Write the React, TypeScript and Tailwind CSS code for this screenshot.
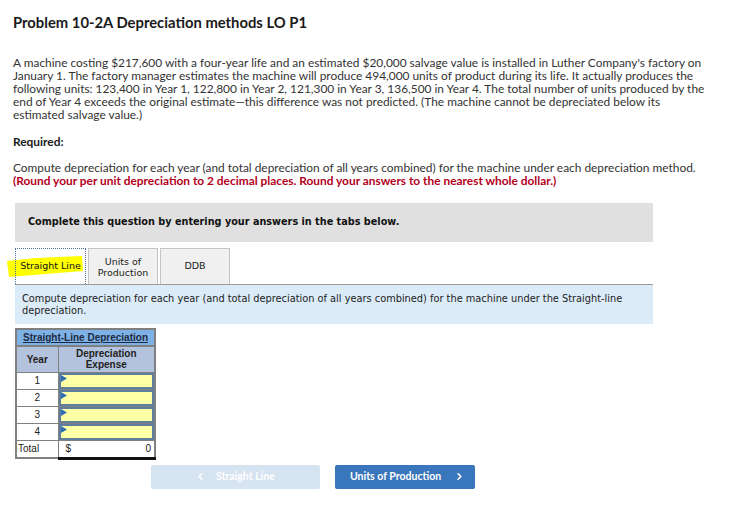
import React from "react";
import { ChevronLeft, ChevronRight } from "lucide-react";

const Tri = () => (
  <svg className="absolute left-0 top-0" width="6" height="7" viewBox="0 0 6 7">
    <polygon points="0,0 6,3.5 0,7" fill="#2f6db5" />
  </svg>
);

export default function App() {
  const rows = [1, 2, 3, 4];
  return (
    <div className="w-[739px] h-[532px] bg-white text-[#222] font-['Lato',sans-serif] relative overflow-hidden">
      <div className="pl-[13px] pr-[10px]">
        <h1 className="pt-[13px] text-[14.8px] leading-[18px] font-bold text-[#1a1a1a]">
          Problem 10-2A Depreciation methods LO P1
        </h1>
        <p className="mt-[25px] text-[11.9px] leading-[13px] text-[#333] whitespace-nowrap">
          A machine costing $217,600 with a four-year life and an estimated $20,000 salvage value is installed in Luther Company's factory on
          <br />
          January 1. The factory manager estimates the machine will produce 494,000 units of product during its life. It actually produces the
          <br />
          following units: 123,400 in Year 1, 122,800 in Year 2, 121,300 in Year 3, 136,500 in Year 4. The total number of units produced by the
          <br />
          end of Year 4 exceeds the original estimate—this difference was not predicted. (The machine cannot be depreciated below its
          <br />
          estimated salvage value.)
        </p>
        <p className="mt-[14px] text-[11.9px] leading-[13px] font-bold text-[#1a1a1a]">Required:</p>
        <p className="mt-[13px] text-[11.9px] leading-[13px] text-[#333] whitespace-nowrap">
          Compute depreciation for each year (and total depreciation of all years combined) for the machine under each depreciation method.
        </p>
        <p className="text-[11.9px] leading-[13px] font-bold text-[#b3001b] whitespace-nowrap">
          (Round your per unit depreciation to 2 decimal places. Round your answers to the nearest whole dollar.)
        </p>
      </div>

      <div className="ml-[15px] w-[638px] mt-[16px] font-['DejaVu_Sans',sans-serif]">
        <div className="h-[39px] bg-[#e0e0e0] flex items-center pl-[13px] text-[9.7px] font-bold text-[#111]">
          Complete this question by entering your answers in the tabs below.
        </div>

        <div className="mt-[6px] flex items-end gap-[2px] relative">
          <svg className="absolute left-[-9px] top-[7px]" width="78" height="23" viewBox="0 0 78 23">
            <polygon points="1,6 30,3 76,1 77,16 40,19 3,22" fill="#ffff00" />
          </svg>
          <div className="relative w-[71px] h-[36px] bg-transparent border border-dotted border-[#4a6f99] border-b-0 flex items-center justify-center text-[9.5px] text-[#111]">
            <span className="relative">Straight Line</span>
          </div>
          <div className="w-[70px] h-[36px] bg-[#f0f0f0] border border-[#c4c4c4] border-b-0 flex items-center justify-center text-center text-[9.5px] leading-[11px] text-[#222]">
            Units of<br />Production
          </div>
          <div className="w-[70px] h-[36px] bg-[#f0f0f0] border border-[#c4c4c4] border-b-0 flex items-center justify-center text-[9.5px] text-[#222]">
            DDB
          </div>
        </div>

        <div className="bg-[#dbebf8] border-t border-[#999] h-[40px] pl-[7px] pt-[8px] text-[9.8px] leading-[12px] text-[#222]">
          Compute depreciation for each year (and total depreciation of all years combined) for the machine under the Straight-line
          <br />
          depreciation.
        </div>

        <table className="mt-[4px] border-collapse font-['Liberation_Sans',sans-serif] text-[10px] text-[#222]">
          <tbody>
            <tr>
              <td colSpan={2} className="h-[17px] bg-[#7eb2e6] border-2 border-[#808080] text-center font-bold text-[10px] underline text-[#1d2a40] p-0">
                Straight-Line Depreciation
              </td>
            </tr>
            <tr>
              <td className="w-[42px] h-[26px] bg-[#b3c3dd] border border-[#808080] border-l-2 text-center font-bold p-0">Year</td>
              <td className="w-[97px] h-[26px] bg-[#b3c3dd] border border-[#808080] border-r-2 text-center font-bold leading-[11px] p-0">
                Depreciation<br />Expense
              </td>
            </tr>
            {rows.map((r) => (
              <tr key={r}>
                <td className="h-[16px] border border-[#808080] border-l-2 text-center p-0 bg-white leading-[14px]">{r}</td>
                <td className="h-[16px] border border-[#808080] border-r-2 p-0">
                  <div className="relative h-[16px] bg-[#ffffa6] border-2 border-[#5f7e9e]">
                    <Tri />
                  </div>
                </td>
              </tr>
            ))}
            <tr>
              <td className="h-[18px] border border-[#808080] border-l-2 border-b-2 pl-[1px] p-0 bg-white">Total</td>
              <td className="h-[18px] border-t border-t-[#555] border-r-2 border-r-[#808080] border-b-[3px] border-b-[#111] p-0 bg-white">
                <div className="flex justify-between pl-[7px] pr-[3px]">
                  <span>$</span>
                  <span>0</span>
                </div>
              </td>
            </tr>
          </tbody>
        </table>
      </div>

      <div className="flex ml-[151px] mt-[5px] gap-[15px] font-['Lato',sans-serif] text-[10.5px] font-bold text-white">
        <div className="w-[169px] h-[24px] bg-[#d6e3f1] rounded-[2px] flex items-center pl-[44px]">
          <ChevronLeft size={11} strokeWidth={3.5} className="mr-[10px]" />
          <span>Straight Line</span>
        </div>
        <div className="w-[140px] h-[24px] bg-[#3a76bb] rounded-[2px] flex items-center pl-[15px]">
          <span>Units of Production</span>
          <ChevronRight size={11} strokeWidth={3.5} className="ml-[13px]" />
        </div>
      </div>
    </div>
  );
}
